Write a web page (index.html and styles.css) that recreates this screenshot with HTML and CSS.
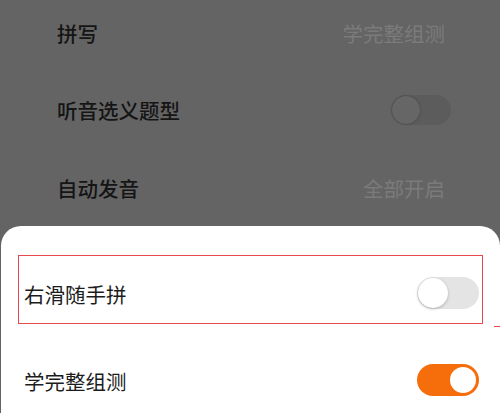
FILE: index.html
```html
<!DOCTYPE html>
<html lang="zh-CN">
<head>
<meta charset="utf-8">
<link rel="stylesheet" href="styles.css">
</head>
<body>
<div class="page">
  <div class="bg-list">
    <div class="bg-row"><span class="bg-label">拼写</span><span class="bg-value">学完整组测</span></div>
    <div class="bg-row"><span class="bg-label">听音选义题型</span><span class="dim-switch"><span class="dim-knob"></span></span></div>
    <div class="bg-row"><span class="bg-label">自动发音</span><span class="bg-value">全部开启</span></div>
  </div>
  <div class="sheet">
    <div class="highlight">
      <span class="sheet-label">右滑随手拼</span>
      <span class="switch off"><span class="knob"></span></span>
    </div>
    <span class="mark"></span>
    <div class="sheet-row">
      <span class="sheet-label">学完整组测</span>
      <span class="switch on"><span class="knob"></span></span>
    </div>
  </div>
</div>
</body>
</html>
```

FILE: styles.css
```css
* { box-sizing: border-box; }
html, body { margin: 0; padding: 0; }
body {
  width: 500px;
  height: 413px;
  overflow: hidden;
  background: #646464;
  font-family: "Noto Sans CJK SC", "Noto Sans", sans-serif;
}
.page {
  display: flex;
  flex-direction: column;
  height: 413px;
}
.bg-list {
  height: 232px;
  flex-shrink: 0;
  display: flex;
  flex-direction: column;
  margin-top: -6px;
  padding: 0 49px 0 57px;
}
.bg-row {
  height: 77.5px;
  display: flex;
  align-items: center;
  justify-content: space-between;
  flex-shrink: 0;
}
.bg-label {
  font-size: 20.5px;
  font-weight: 500;
  color: #151515;
  line-height: 1;
}
.bg-value {
  font-size: 20.5px;
  color: #7b7b7b;
  line-height: 1;
  margin-right: 6px;
}
.dim-switch {
  width: 60px;
  height: 30px;
  border-radius: 15px;
  background: #5c5c5c;
  display: flex;
  align-items: center;
  padding-left: 1px;
}
.dim-knob {
  width: 28px;
  height: 28px;
  border-radius: 50%;
  background: #666;
  box-shadow: 0 0 2px rgba(0,0,0,0.35);
}
.sheet {
  position: relative;
  flex: 1;
  margin-left: 1px;
  background: #fff;
  border-radius: 20px 20px 0 0;
  padding: 29px 0 0 17px;
}
.highlight {
  width: 465px;
  height: 69px;
  border: 1px solid #e8474b;
  display: flex;
  align-items: center;
  justify-content: space-between;
  padding: 7px 3px 0 5px;
}
.mark {
  position: absolute;
  left: 493px;
  top: 100px;
  width: 6px;
  height: 1px;
  background: #e8474b;
}
.sheet-row {
  width: 465px;
  display: flex;
  align-items: center;
  justify-content: space-between;
  padding: 40px 4px 0 6px;
}
.sheet-label {
  font-size: 20.5px;
  color: #1c1c1c;
  line-height: 1;
  padding-top: 3px;
}
.switch {
  width: 62px;
  height: 32px;
  border-radius: 16px;
  display: flex;
  align-items: center;
  padding: 0 1px;
}
.switch.off {
  background: #e4e4e4;
  justify-content: flex-start;
}
.switch.off .knob {
  width: 30px;
  height: 30px;
  border-radius: 50%;
  background: #fff;
  box-shadow: 0 1px 3px rgba(0,0,0,0.25);
}
.switch.on {
  background: #f66d0b;
  justify-content: flex-end;
}
.switch.on .knob {
  width: 30px;
  height: 30px;
  border-radius: 50%;
  background: #fff;
  border: 2px solid #f66d0b;
}
```
